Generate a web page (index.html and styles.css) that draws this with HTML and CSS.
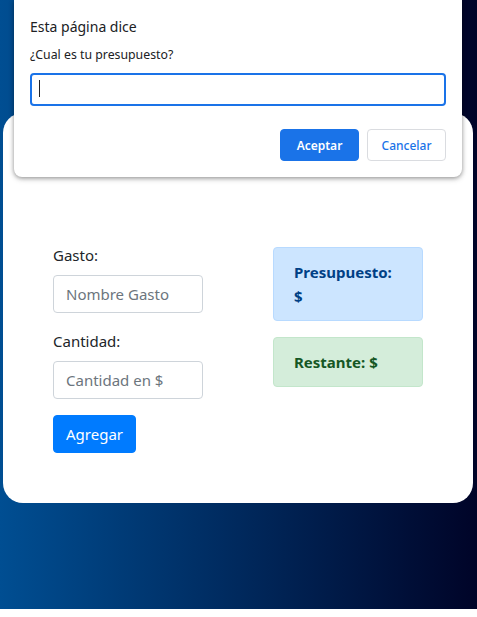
FILE: index.html
```html
<!DOCTYPE html>
<html lang="es">
<head>
<meta charset="utf-8">
<title>Presupuesto</title>
<link rel="stylesheet" href="styles.css">
</head>
<body>
<div class="page">
  <div class="card">
    <div class="content">
      <form class="form">
        <div class="form-group">
          <label class="label">Gasto:</label>
          <input class="form-control" type="text" placeholder="Nombre Gasto">
        </div>
        <div class="form-group">
          <label class="label">Cantidad:</label>
          <input class="form-control" type="text" placeholder="Cantidad en $">
        </div>
        <button class="btn-primary" type="button">Agregar</button>
      </form>
      <div class="alerts">
        <div class="alert alert-primary">Presupuesto: $</div>
        <div class="alert alert-success">Restante: $</div>
      </div>
    </div>
  </div>
</div>

<div class="dialog">
  <div class="dialog-title">Esta página dice</div>
  <div class="dialog-msg">¿Cual es tu presupuesto?</div>
  <div class="dialog-input"><span class="caret"></span></div>
  <div class="dialog-actions">
    <button class="dbtn dbtn-ok" type="button">Aceptar</button>
    <button class="dbtn dbtn-cancel" type="button">Cancelar</button>
  </div>
</div>
</body>
</html>
```
FILE: styles.css
```css
* { box-sizing: border-box; }
html, body { margin: 0; padding: 0; background: #fff; }
body {
  font-family: "Noto Sans", "Open Sans", sans-serif;
  color: #212529;
  font-size: 15px;
  line-height: 24px;
}
.page {
  height: 609px;
  background: linear-gradient(to right, #004e92, #000428);
  padding: 113px 4px 0 3px;
}
.card {
  background: #fff;
  border-radius: 20px;
  height: 390px;
  padding: 130px 50px 50px;
}
.content {
  display: flex;
  justify-content: space-between;
  align-items: flex-start;
}
.form { width: 150px; margin: 0; }
.form-group { margin-bottom: 16px; }
.label { display: block; margin-bottom: 8px; }
.form-control {
  display: block;
  width: 150px;
  height: 38px;
  padding: 6px 12px;
  font: inherit;
  color: #495057;
  border: 1px solid #ced4da;
  border-radius: 4px;
  background: #fff;
}
.form-control::placeholder { color: #6c757d; opacity: 1; }
.btn-primary {
  display: block;
  height: 38px;
  padding: 6px 12px;
  font: inherit;
  color: #fff;
  background: #007bff;
  border: 1px solid #007bff;
  border-radius: 4px;
}
.alerts { width: 150px; margin-top: 4px; }
.alert {
  padding: 12px 20px;
  margin-bottom: 16px;
  border: 1px solid transparent;
  border-radius: 4px;
  font-weight: 700;
}
.alert-primary { color: #004085; background: #cce5ff; border-color: #b8daff; }
.alert-success { color: #155724; background: #d4edda; border-color: #c3e6cb; }

.dialog {
  position: absolute;
  top: 0;
  left: 14px;
  width: 448px;
  height: 177px;
  background: #fff;
  border-radius: 0 0 8px 8px;
  box-shadow: 0 1px 4px rgba(0,0,0,0.35), 0 2px 6px rgba(0,0,0,0.15);
  padding: 17px 16px 0;
  font-family: "Noto Sans", "Open Sans", sans-serif;
  color: #202124;
}
.dialog-title { font-size: 14px; line-height: 20px; }
.dialog-msg { font-size: 12.3px; line-height: 16px; margin-top: 10px; }
.dialog-input {
  margin-top: 10px;
  height: 33px;
  border: 2px solid #1a73e8;
  border-radius: 4px;
  padding: 5px 6px;
}
.caret {
  display: block;
  width: 1px;
  height: 17px;
  margin-left: 1px;
  background: #202124;
}
.dialog-actions {
  display: flex;
  justify-content: flex-end;
  gap: 8px;
  margin-top: 23px;
}
.dbtn {
  width: 79px;
  height: 32px;
  border-radius: 4px;
  font-family: inherit;
  font-size: 12px;
  font-weight: 600;
  padding: 0;
}
.dbtn-ok { background: #1a73e8; color: #fff; border: 1px solid #1a73e8; }
.dbtn-cancel { background: #fff; color: #1a73e8; border: 1px solid #dadce0; font-weight: 500; }
```
